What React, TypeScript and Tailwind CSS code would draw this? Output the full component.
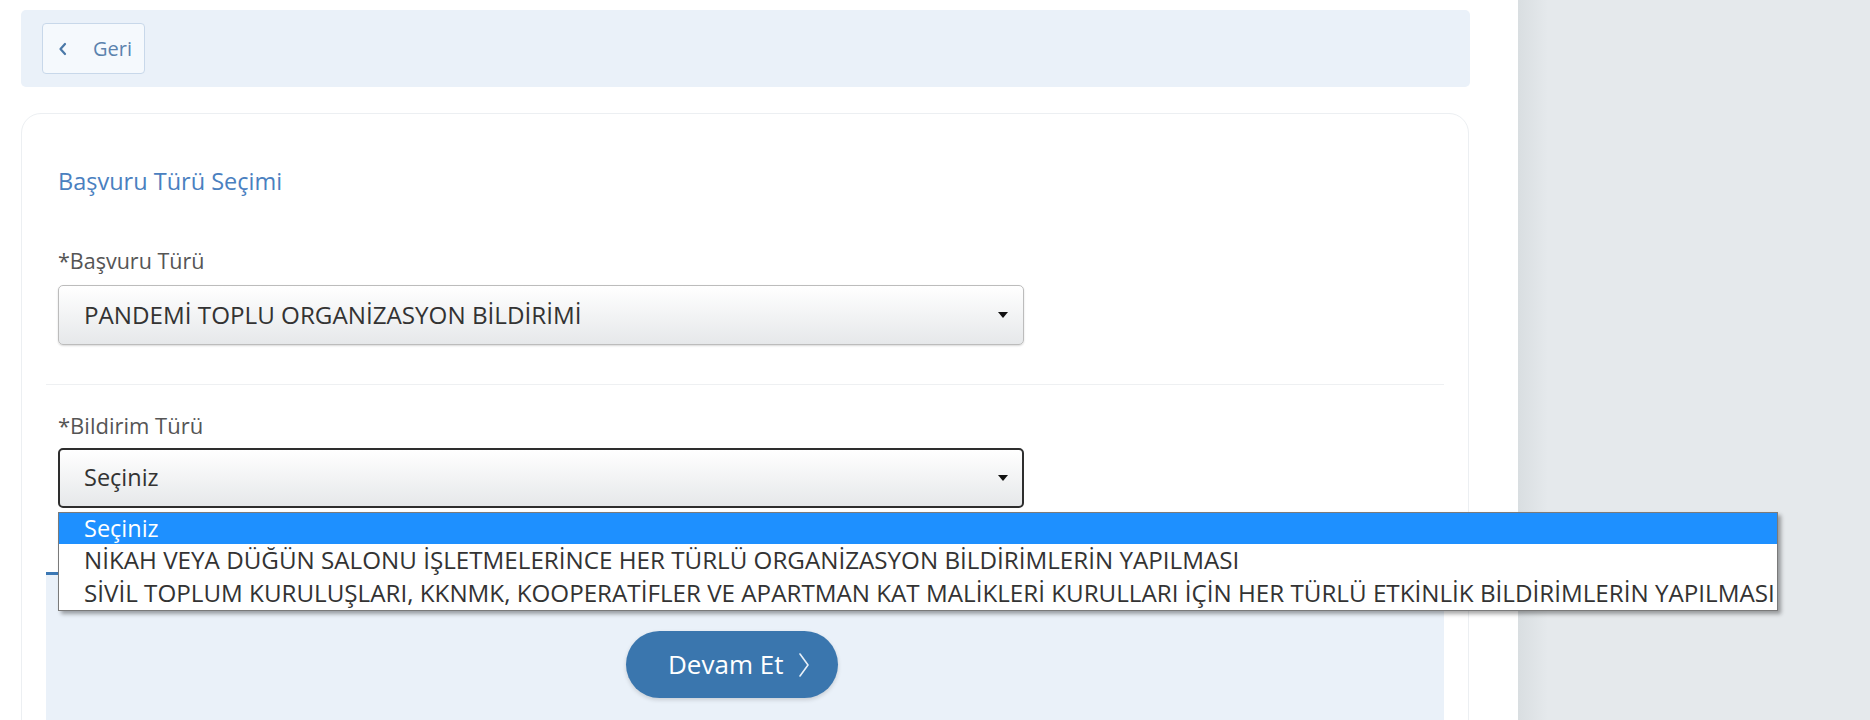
import React from "react";

function Caret() {
  return (
    <svg width="12" height="8" viewBox="0 0 12 8" className="shrink-0">
      <path d="M1 1 L11 1 L6 7 Z" fill="#111" />
    </svg>
  );
}

export default function App() {
  return (
    <div className="flex h-[720px] w-full overflow-hidden bg-white font-['Open_Sans','Noto_Sans',sans-serif]">
      <div className="w-[1518px] shrink-0 pl-[21px] pt-[10px]">
        <div className="flex h-[77px] w-[1449px] items-center rounded-[5px] bg-[#eaf1f9] pl-[21px]">
          <button className="flex h-[51px] w-[103px] items-center rounded-[4px] border border-[#c8d8ea] bg-[#f5f9fd] pl-[15px]">
            <svg width="10" height="14" viewBox="0 0 10 14">
              <path d="M7 2 L2.5 7 L7 12" fill="none" stroke="#4a78a8" strokeWidth="2.2" strokeLinecap="round" strokeLinejoin="round" />
            </svg>
            <span className="ml-[25px] text-[20px] text-[#5b82ad]">Geri</span>
          </button>
        </div>

        <div className="mt-[26px] h-[640px] w-[1448px] rounded-[20px] border border-[#eceff2] px-[24px]">
          <div className="px-[12px] pt-[52px]">
            <div className="text-[23.5px] leading-[30px] text-[#4a80bf]">Başvuru Türü Seçimi</div>
            <div className="mt-[50px] text-[21.5px] leading-[30px] text-[#555]">*Başvuru Türü</div>
            <div className="mt-[9px] flex h-[60px] w-[966px] items-center justify-between rounded-[5px] border border-[#bcbcbc] bg-gradient-to-b from-white to-[#e6e8ea] pl-[25px] pr-[14px] shadow-[0_1px_2px_rgba(0,0,0,0.15)]">
              <span className="text-[24.2px] text-[#333]">PANDEMİ TOPLU ORGANİZASYON BİLDİRİMİ</span>
              <Caret />
            </div>
          </div>

          <div className="mt-[39px] h-px bg-[#eef0f2]" />

          <div className="px-[12px] pt-[25px]">
            <div className="text-[22px] leading-[30px] text-[#555]">*Bildirim Türü</div>
            <div className="relative mt-[8px]">
              <div className="flex h-[60px] w-[966px] items-center justify-between rounded-[5px] border-2 border-[#2e2e2e] bg-gradient-to-b from-white to-[#e6e8ea] pl-[24px] pr-[13px]">
                <span className="text-[23.5px] text-[#333]">Seçiniz</span>
                <Caret />
              </div>
              <div className="absolute left-0 top-[64px] z-10 w-[1720px] border border-[#7a7a7a] bg-white shadow-[3px_3px_4px_rgba(0,0,0,0.35)]">
                <div className="flex h-[31px] items-center bg-[#1e90ff] pl-[25px] text-[23.5px] text-white">Seçiniz</div>
                <div className="flex h-[33px] items-center pl-[25px] text-[24.2px] text-[#333]">
                  NİKAH VEYA DÜĞÜN SALONU İŞLETMELERİNCE HER TÜRLÜ ORGANİZASYON BİLDİRİMLERİN YAPILMASI
                </div>
                <div className="flex h-[33px] items-center pl-[25px] text-[24.2px] text-[#333]">
                  SİVİL TOPLUM KURULUŞLARI, KKNMK, KOOPERATİFLER VE APARTMAN KAT MALİKLERİ KURULLARI İÇİN HER TÜRLÜ ETKİNLİK BİLDİRİMLERİN YAPILMASI
                </div>
              </div>
            </div>
          </div>

          <div className="mt-[64px] h-[200px] border-t-[3px] border-[#3c78b4] bg-[#eaf1f9] pt-[56px]">
            <div className="flex justify-center pr-[26px]">
              <button className="flex h-[67px] w-[212px] items-center rounded-full bg-[#3a76ae] pl-[42px] shadow-[0_2px_4px_rgba(0,0,0,0.15)]">
                <span className="text-[26px] text-white">Devam Et</span>
                <svg width="12" height="26" viewBox="0 0 12 26" className="ml-[15px]">
                  <path d="M2 2 L10 13 L2 24" fill="none" stroke="#e8f0f8" strokeWidth="1.6" strokeLinecap="round" strokeLinejoin="round" />
                </svg>
              </button>
            </div>
          </div>
        </div>
      </div>

      <div className="flex flex-1">
        <div className="w-[30px] bg-gradient-to-r from-[#d9dee1] to-[#e5e9ec]" />
        <div className="flex-1 bg-[#e5e9ec]" />
      </div>
    </div>
  );
}
